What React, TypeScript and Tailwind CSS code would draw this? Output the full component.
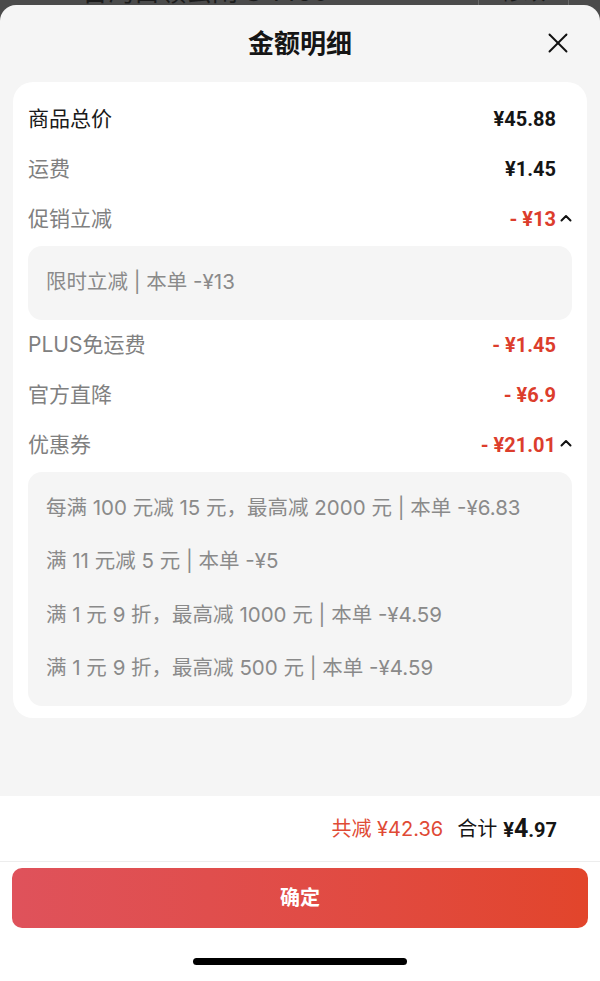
import React from "react";

const cjk = { fontFamily: '"Inter", "Noto Sans CJK SC", sans-serif' };
const num = { fontFamily: 'Roboto, "Noto Sans CJK SC", sans-serif' };

function Chevron() {
  return (
    <svg width="12" height="8" viewBox="0 0 12 8" className="ml-[4px] -mt-[3px]">
      <polyline points="1.5,6.5 6,2 10.5,6.5" fill="none" stroke="#111" strokeWidth="2" strokeLinecap="round" strokeLinejoin="round" />
    </svg>
  );
}

function Row({
  label,
  amount,
  dark,
  red,
  chevron,
}: {
  label: string;
  amount: string;
  dark?: boolean;
  red?: boolean;
  chevron?: boolean;
}) {
  return (
    <div className="flex h-[50px] items-center justify-between">
      <span className={`text-[21px] ${dark ? "text-[#1a1a1a]" : "text-[#808080]"}`} style={cjk}>
        {label}
      </span>
      <div className="flex items-center">
        <span className={`text-[20px] font-bold ${red ? "text-[#dc3d2c]" : "text-[#151515]"}`} style={num}>
          {amount}
        </span>
        <div className="flex w-[16px] items-center justify-end">{chevron ? <Chevron /> : null}</div>
      </div>
    </div>
  );
}

function SubBox({ lines }: { lines: string[] }) {
  return (
    <div className="mt-[2px] rounded-[14px] bg-[#f5f5f5] px-[18px] py-[10px]">
      {lines.map((l) => (
        <div key={l} className="flex h-[53.5px] items-center whitespace-pre text-[20.5px] text-[#8a8a8a]" style={cjk}>
          {l}
        </div>
      ))}
    </div>
  );
}

export default function App() {
  return (
    <div className="flex min-h-[981px] w-full flex-col bg-[#4b4b4b]" style={cjk}>
      {/* top strip of underlying page */}
      <div className="relative flex h-[5px] overflow-hidden">
        <div className="ml-[82px] -mt-[21px] whitespace-nowrap text-[26px] leading-[26px] text-[#1c1c1c]" style={cjk}>
          台湾白领云闹 S 1450
        </div>
        <div className="ml-auto mr-[31px] flex h-[5px] w-[91px] justify-center border-x border-[#6a6a6a]">
          <span className="-mt-[20px] text-[22px] leading-[22px] text-[#1c1c1c]">修改</span>
        </div>
      </div>

      <div className="flex flex-1 flex-col overflow-hidden rounded-t-[16px] bg-[#f5f5f5]">
        {/* header */}
        <div className="relative flex h-[77px] items-center justify-center">
          <span className="text-[26px] font-semibold text-[#151515]" style={cjk}>
            金额明细
          </span>
          <svg
            width="20"
            height="20"
            viewBox="0 0 20 20"
            className="absolute right-[32px] top-[28px]"
          >
            <line x1="1.5" y1="1.5" x2="18.5" y2="18.5" stroke="#111" strokeWidth="1.9" strokeLinecap="round" />
            <line x1="18.5" y1="1.5" x2="1.5" y2="18.5" stroke="#111" strokeWidth="1.9" strokeLinecap="round" />
          </svg>
        </div>

        {/* card */}
        <div className="mx-[13px] rounded-[20px] bg-white px-[15px] py-[12px]">
          <Row label="商品总价" amount="¥45.88" dark />
          <Row label="运费" amount="¥1.45" />
          <Row label="促销立减" amount="- ¥13" red chevron />
          <SubBox lines={["限时立减 | 本单 -¥13"]} />
          <Row label="PLUS免运费" amount="- ¥1.45" red />
          <Row label="官方直降" amount="- ¥6.9" red />
          <Row label="优惠券" amount="- ¥21.01" red chevron />
          <SubBox
            lines={[
              "每满 100 元减 15 元，最高减 2000 元 | 本单 -¥6.83",
              "满 11 元减 5 元 | 本单 -¥5",
              "满 1 元 9 折，最高减 1000 元 | 本单 -¥4.59",
              "满 1 元 9 折，最高减 500 元 | 本单 -¥4.59",
            ]}
          />
        </div>

        <div className="flex-1" />

        {/* footer */}
        <div className="flex flex-col bg-white">
          <div className="flex h-[66px] items-center justify-end border-b border-[#ededed] pr-[43px]">
            <span className="text-[20px] text-[#e04a35]" style={cjk}>
              共减 ¥42.36
            </span>
            <span className="ml-[14px] text-[20px] text-[#151515]" style={cjk}>
              合计
            </span>
            <span className="ml-[6px] flex items-baseline font-bold text-[#151515]" style={num}>
              <span className="text-[20px]">¥</span>
              <span className="text-[25px]">4</span>
              <span className="text-[20px]">.97</span>
            </span>
          </div>
          <div className="px-[12px] pt-[6px]">
            <button className="flex h-[60px] w-full items-center justify-center rounded-[10px] bg-linear-to-r from-[#df525b] to-[#e2452b]">
              <span className="text-[20px] font-semibold text-white" style={cjk}>
                确定
              </span>
            </button>
          </div>
          <div className="flex h-[53px] items-center justify-center pt-[13px]">
            <div className="h-[7px] w-[214px] rounded-full bg-black" />
          </div>
        </div>
      </div>
    </div>
  );
}
